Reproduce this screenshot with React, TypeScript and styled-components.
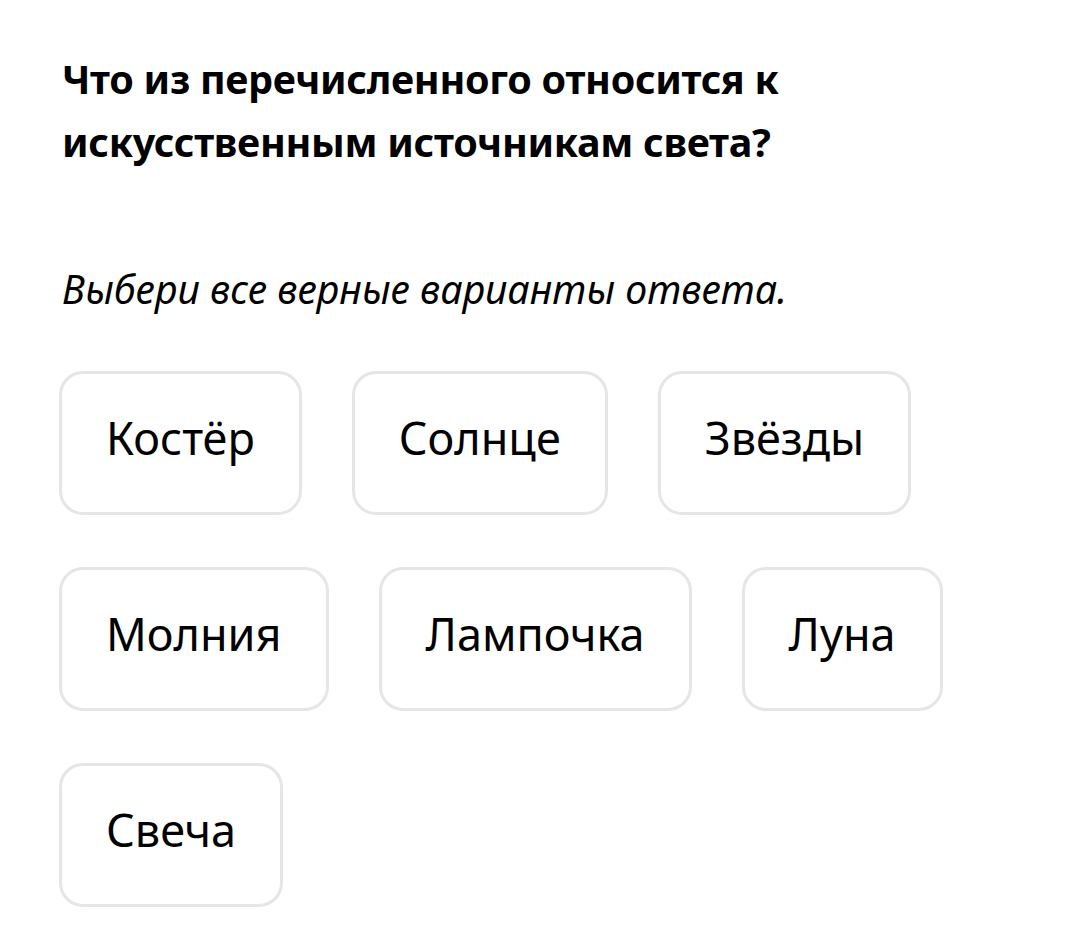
import styled, { createGlobalStyle } from "styled-components";

const options = ["Костёр", "Солнце", "Звёзды", "Молния", "Лампочка", "Луна", "Свеча"];

const GlobalStyle = createGlobalStyle`
  html, body {
    margin: 0;
    padding: 0;
    background: #ffffff;
  }
  body {
    font-family: "Noto Sans", "Open Sans", sans-serif;
    color: #000000;
  }
`;

const App = () => {
  return (
    <>
      <GlobalStyle />
      <Page>
        <Question>
          Что из перечисленного относится к
          <br />
          искусственным источникам света?
        </Question>
        <Hint>Выбери все верные варианты ответа.</Hint>
        <Options>
          {options.map((option) => (
            <Option key={option}>{option}</Option>
          ))}
        </Options>
      </Page>
    </>
  );
};

export default App;

const Page = styled.div`
  display: flex;
  flex-direction: column;
  padding: 48px 59px 0 59px;
  width: 1080px;
  box-sizing: border-box;
`;

const Question = styled.h1`
  margin: 0 0 0 3px;
  font-size: 39.5px;
  font-weight: 700;
  line-height: 63px;
  letter-spacing: -0.3px;
`;

const Hint = styled.p`
  margin: 90px 0 0 3px;
  font-size: 39.3px;
  font-style: italic;
  font-weight: 400;
  line-height: 50px;
`;

const Options = styled.div`
  display: flex;
  flex-wrap: wrap;
  gap: 52px 50px;
  margin-top: 57px;
`;

const Option = styled.button`
  height: 144px;
  padding: 0 44px 12px;
  border: 3px solid #e6e6e6;
  border-radius: 24px;
  background: #ffffff;
  font-family: inherit;
  font-size: 45px;
  color: #000000;
  cursor: pointer;
`;
